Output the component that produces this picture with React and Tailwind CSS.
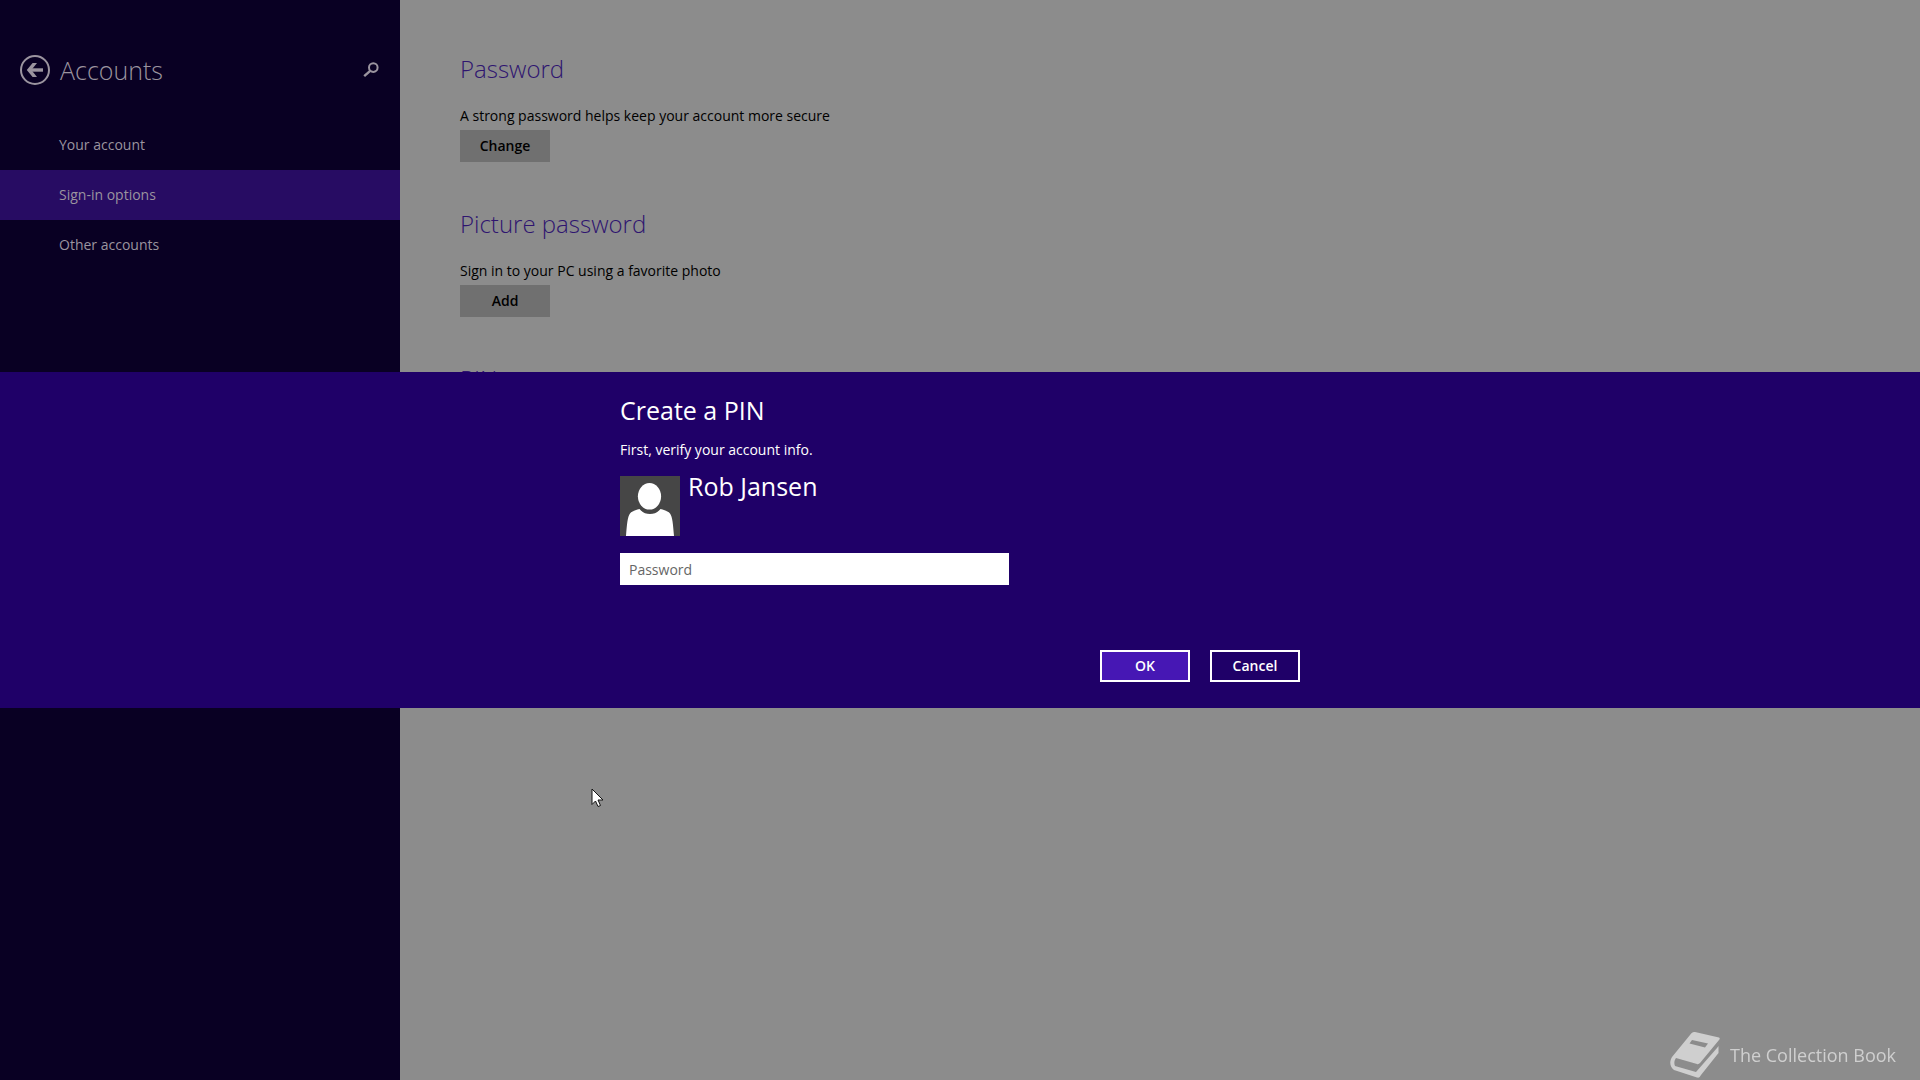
const navItems = [
  { label: "Your account" },
  { label: "Sign-in options", active: true },
  { label: "Other accounts" },
];

const sections = [
  { title: "Password", text: "A strong password helps keep your account more secure", action: "Change" },
  { title: "Picture password", text: "Sign in to your PC using a favorite photo", action: "Add" },
  { title: "PIN" },
];

function Sidebar() {
  return (
    <aside className="w-[400px] shrink-0 bg-[#090023] pt-[50px] text-[#9b949f]">
      <header className="flex h-10 items-center px-5">
        <button aria-label="Back" className="h-[30px] w-[30px]">
          <svg viewBox="0 0 30 30" className="h-full w-full" fill="none" stroke="currentColor">
            <circle cx="15" cy="15" r="14" strokeWidth="2" />
            <path d="M9.5 15H23" strokeWidth="3.4" />
            <path d="M6.800 15L12.600 8H17L11.400 15L17 22H12.600Z" fill="currentColor" stroke="none" />
          </svg>
        </button>
        <h1 className="ml-[10px] text-[25px] leading-10 font-light">Accounts</h1>
        <button aria-label="Search" className="mr-px ml-auto h-4 w-4">
          <svg viewBox="0 0 16 16" className="h-full w-full" fill="none" stroke="currentColor">
            <circle cx="10.3" cy="5.6" r="4.3" strokeWidth="2" />
            <path d="M7.2 8.8L1.2 14.2" strokeWidth="2.4" />
          </svg>
        </button>
      </header>
      <nav className="mt-[30px]">
        {navItems.map((item) => (
          <a
            key={item.label}
            href="#"
            className={`flex h-[50px] items-center pl-[59px] text-sm ${item.active ? "bg-[#270c63]" : ""}`}
          >
            {item.label}
          </a>
        ))}
      </nav>
    </aside>
  );
}

function Section({ title, text, action }) {
  return (
    <section className="mb-[43px]">
      <h2 className="text-2xl leading-[38px] font-light text-[#2f1570]">{title}</h2>
      {text && <p className="mt-[18px] text-sm leading-5 text-black">{text}</p>}
      {action && (
        <button className="mt-1 h-8 w-[90px] bg-[#707070] text-sm font-semibold text-black">{action}</button>
      )}
    </section>
  );
}

function PinDialog() {
  return (
    <div className="fixed inset-0 flex items-center">
      <div role="dialog" aria-labelledby="pin-title" className="w-full bg-[#1f0068] pt-5 pb-[26px] text-white">
        <form className="mx-auto max-w-[680px]" onSubmit={(event) => event.preventDefault()}>
          <h2 id="pin-title" className="text-[25px] leading-9">Create a PIN</h2>
          <p className="mt-3 text-sm leading-5">First, verify your account info.</p>
          <div className="mt-4 flex gap-2">
            <svg viewBox="0 0 60 60" className="h-[60px] w-[60px] bg-[#464646]" fill="#fff">
              <ellipse cx="29.5" cy="20.3" rx="11.6" ry="13.3" />
              <path d="M6 60C7 48 7.500 41 10 37.500C12 35 16 34 19.500 33C23 37 26 38 30 38C34 38 37 37 40.500 33C44 34 48 35 50 37.500C52.500 41 53 48 54 60Z" />
            </svg>
            <span className="-mt-2 text-[25px] leading-9">Rob Jansen</span>
          </div>
          <input
            type="password"
            aria-label="Password"
            placeholder="Password"
            className="mt-[17px] block h-8 w-[389px] bg-white px-[9px] text-sm text-black outline-none placeholder:text-[#666]"
          />
          <div className="mt-[65px] flex justify-end gap-5 text-sm font-semibold">
            <button type="submit" className="h-8 w-[90px] border-2 border-white bg-[#4617b4]">OK</button>
            <button type="button" className="h-8 w-[90px] border-2 border-white">Cancel</button>
          </div>
        </form>
      </div>
    </div>
  );
}

function Watermark() {
  return (
    <div className="fixed right-6 bottom-px flex items-center gap-[10px] text-[#cfcfcf]">
      <svg viewBox="0 0 50 48" className="h-12 w-[50px]" fill="currentColor">
        <path fillRule="evenodd" d="M25 1L49 6.500C50 7 50 8 49 9L30 32C29 33 28 33.500 27 33L6 27C4 30 4 33 5 35L26 41L47 17L48.500 15V22L31 44C30 46 29 47 27 46.500L4 39C0 36 -1 31 2 26L20 4C21 2 23 .5 25 1ZM22 9L19.500 12.500L35 16.500L38 12.500Z" />
      </svg>
      <span className="text-lg leading-6">The Collection Book</span>
    </div>
  );
}

export default function App() {
  return (
    <div className="flex h-screen overflow-hidden bg-[#8c8c8c] font-['Segoe_UI','Open_Sans',sans-serif]">
      <Sidebar />
      <main className="min-w-0 flex-1 pt-[50px] pl-[60px]">
        {sections.map((section) => (
          <Section key={section.title} {...section} />
        ))}
      </main>
      <PinDialog />
      <Watermark />
      <svg viewBox="0 0 13 20" className="fixed top-[788px] left-[591px] h-5 w-[13px]" fill="#fff" stroke="#111">
        <path d="M1 1V16.500L4.500 13L7 18.500L9.500 17.500L7 12H12Z" />
      </svg>
    </div>
  );
}
